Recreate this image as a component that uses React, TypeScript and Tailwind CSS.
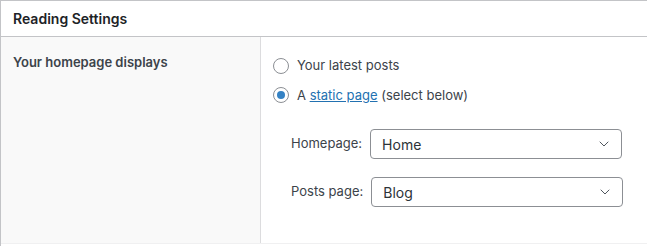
import { ChevronDown } from 'lucide-react';

function Radio({ checked }: { checked?: boolean }) {
  return (
    <span className="flex h-4 w-4 shrink-0 items-center justify-center rounded-full border border-[#8c8f94] bg-white">
      {checked && <span className="h-2 w-2 rounded-full bg-[#3582c4]" />}
    </span>
  );
}

function Select({ value }: { value: string }) {
  return (
    <div className="flex h-[30px] w-[252px] items-center justify-between rounded border border-[#8c8f94] bg-white pl-[11px] pr-[9px] text-[14px] text-[#2c3338]">
      <span>{value}</span>
      <ChevronDown className="h-4 w-4 text-[#50575e]" strokeWidth={1.5} />
    </div>
  );
}

export default function App() {
  return (
    <div className="h-[246px] w-[647px] overflow-hidden border-l border-t border-[#c3c4c7] bg-white font-['Inter',sans-serif] text-[#3c434a]">
      <div className="flex h-[36px] items-center border-b border-[#c3c4c7] px-3">
        <h2 className="text-[14px] font-semibold text-[#1d2327]">Reading Settings</h2>
      </div>

      <div className="flex h-[207px] border-b border-[#f0f0f1]">
        <div className="w-[260px] shrink-0 border-r border-[#dcdcde] bg-[#f9f9f9] px-3 pt-[16px]">
          <div className="text-[13px] font-semibold text-[#3c434a]">Your homepage displays</div>
        </div>

        <div className="flex-1 pl-3 pt-[19px] text-[13px]">
          <div className="flex flex-col gap-[10px]">
            <label className="flex items-center gap-2">
              <Radio />
              <span>Your latest posts</span>
            </label>
            <label className="flex items-center gap-2">
              <Radio checked />
              <span>
                A{' '}
                <a className="text-[#2271b1] underline" href="#">
                  static page
                </a>{' '}
                (select below)
              </span>
            </label>
          </div>

          <div className="mt-[24px] flex flex-col gap-[18px] pl-[18px]">
            <div className="flex items-center gap-[8px]">
              <span>Homepage:</span>
              <Select value="Home" />
            </div>
            <div className="flex items-center gap-[8px]">
              <span>Posts page:</span>
              <Select value="Blog" />
            </div>
          </div>
        </div>
      </div>
    </div>
  );
}
